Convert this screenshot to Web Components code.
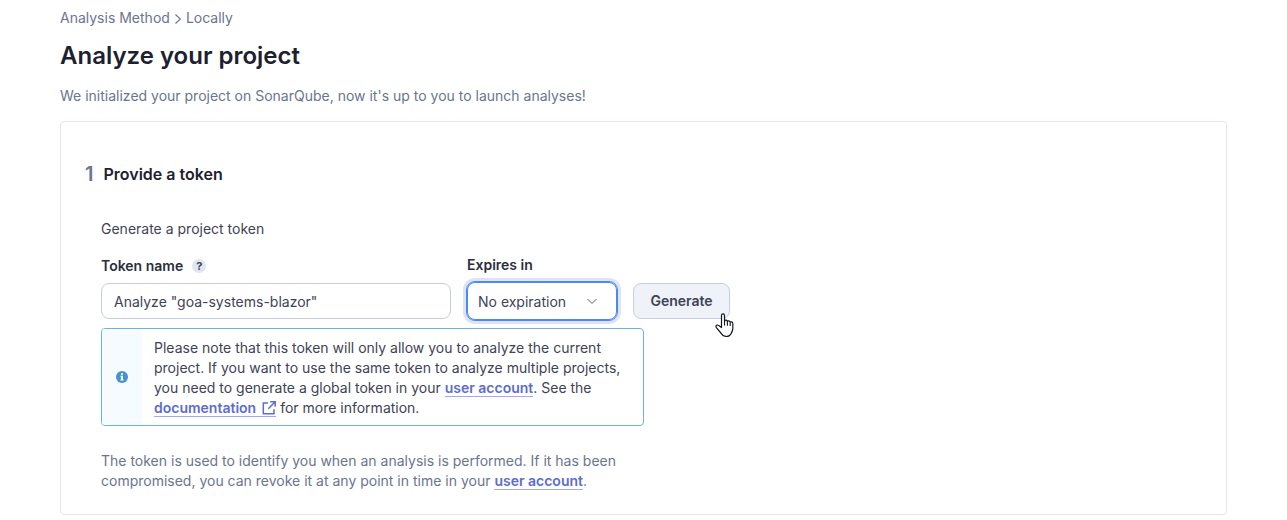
<!DOCTYPE html>
<html lang="en">
<head>
<meta charset="utf-8">
<meta name="viewport" content="width=device-width, initial-scale=1">
<title>Analyze your project</title>
<style>
  body {
    margin: 0;
    background: #fff;
    color: #3e4357;
    font: 400 14px/20px Inter, "Liberation Sans", sans-serif;
    --muted: #6a7590;
    --title: #1d212f;
    --border: #e1e6f3;
    --control-border: #c5cddf;
    --link: #5d6cd0;
  }
</style>
</head>
<body>
<analysis-page></analysis-page>

<template id="t-analysis-page">
  <style>
    :host { display: block; padding: 8px 60px 4px; }
    h1 { margin: 12px 0 14px; color: var(--title); font-size: 24px; line-height: 32px; font-weight: 600; }
    .lead { margin: 0 0 15px; color: var(--muted); }
    .intro { margin: 0 0 16px; }
    .row { display: flex; flex-wrap: wrap; align-items: center; gap: 16px; }
    .name { width: 350px; }
    .expiry { width: 150px; }
    action-button { align-self: flex-end; margin-bottom: 1px; }
    .body { max-width: 543px; }
    info-message { margin-top: 8px; }
    .note { margin: 25px 0 0; color: var(--muted); }
    a { color: var(--link); font-weight: 600; text-decoration: none; border-bottom: 1px solid #a0abee; }
    external-icon { margin-left: 6px; vertical-align: -2px; }
  </style>
  <crumb-trail></crumb-trail>
  <main>
    <h1>Analyze your project</h1>
    <p class="lead">We initialized your project on SonarQube, now it's up to you to launch analyses!</p>
    <step-card number="1">
      <span slot="title">Provide a token</span>
      <p class="intro">Generate a project token</p>
      <div class="row">
        <text-field class="name" label="Token name" value='Analyze "goa-systems-blazor"'></text-field>
        <select-field class="expiry" label="Expires in"></select-field>
        <action-button>Generate</action-button>
      </div>
      <div class="body">
        <info-message>Please note that this token will only allow you to analyze the current project. If you want to use the same token to analyze multiple projects, you need to generate a global token in your <a href="#account">user account</a>. See the <a href="#documentation">documentation<external-icon></external-icon></a> for more information.</info-message>
        <p class="note">The token is used to identify you when an analysis is performed. If it has been compromised, you can revoke it at any point in time in your <a href="#account">user account</a>.</p>
      </div>
    </step-card>
  </main>
</template>

<template id="t-crumb-trail">
  <style>
    :host { display: block; color: var(--muted); }
    nav { display: flex; align-items: center; gap: 4px; }
    a { color: inherit; text-decoration: none; }
    svg { display: block; }
  </style>
  <nav aria-label="Breadcrumb">
    <a href="#method">Analysis Method</a>
    <svg width="8" height="12" viewBox="0 0 8 12" fill="none" stroke="currentColor" stroke-width="1.1" aria-hidden="true"><path d="M1.500 2.500 6.300 7 1.500 11.500"/></svg>
    <a href="#locally">Locally</a>
  </nav>
</template>

<template id="t-step-card">
  <style>
    :host { display: block; border: 1px solid var(--border); border-radius: 4px; padding: 40px 24px 23px; }
    header { display: flex; align-items: center; gap: 10px; }
    .number { color: var(--muted); font-size: 20px; line-height: 24px; font-weight: 600; }
    h2 { margin: 0; color: var(--title); font-size: 16px; line-height: 24px; font-weight: 600; }
    .content { padding: 33px 16px 0; }
  </style>
  <header><span class="number"></span><h2><slot name="title"></slot></h2></header>
  <div class="content"><slot></slot></div>
</template>

<template id="t-text-field">
  <style>
    :host { display: flex; flex-direction: column; gap: 7px; }
    .top { display: flex; align-items: center; gap: 9px; }
    label { font-weight: 600; color: #2a2f40; }
    .help { width: 14px; height: 14px; border: 0; border-radius: 50%; padding: 0; background: var(--border); color: #3e4357; font: 700 11px/14px Inter, sans-serif; text-align: center; }
    input { box-sizing: border-box; width: 100%; height: 36px; padding: 0 12px; border: 1px solid var(--control-border); border-radius: 8px; background: #fff; color: inherit; font: inherit; }
  </style>
  <div class="top"><label for="field"></label><button class="help" type="button" aria-label="Help">?</button></div>
  <input id="field" type="text">
</template>

<template id="t-select-field">
  <style>
    :host { display: flex; flex-direction: column; gap: 7px; }
    label { font-weight: 600; color: #2a2f40; }
    .box { display: grid; align-items: center; }
    select, svg { grid-area: 1 / 1; }
    select { appearance: none; box-sizing: border-box; width: 100%; height: 38px; margin: 0; padding: 1px 32px 0 10px; border: 1px solid #4b8bf0; border-radius: 8px; outline: 1px solid #4b8bf0; background: #fff; box-shadow: 0 0 0 4px #e0e3f8; color: inherit; font: inherit; }
    svg { justify-self: end; margin-right: 19px; pointer-events: none; }
  </style>
  <label for="field"></label>
  <div class="box">
    <select id="field"><option>No expiration</option><option>30 days</option><option>90 days</option><option>1 year</option></select>
    <svg width="12" height="8" viewBox="0 0 12 8" fill="none" stroke="#5a5f70" stroke-width="1" aria-hidden="true"><path d="M1.500 2 6 6.500 10.500 2"/></svg>
  </div>
</template>

<template id="t-action-button">
  <style>
    :host { display: block; position: relative; }
    button { box-sizing: border-box; min-width: 97px; height: 36px; padding: 0 16px; border: 1px solid var(--control-border); border-radius: 8px; background: #eff2f9; color: #3e4357; font: inherit; font-weight: 600; cursor: pointer; display: block; }
    svg { position: absolute; right: -4px; bottom: -19px; pointer-events: none; }
  </style>
  <button type="button"><slot></slot></button>
  <svg width="19" height="25" viewBox="0 0 19 25" aria-hidden="true">
    <path fill="#fff" stroke="#15171f" stroke-width="1.200" stroke-linejoin="round" d="M6.500 14.500V2.600c0-2.200 3-2.200 3 0V8.300c.3-1.600 2.800-1.500 2.900.3.500-1.200 2.700-1.100 2.800.7.700-1 2.600-.6 2.600 1.100v5.200c0 2-.8 3.300-1.500 4.600-1 2.200-2.600 3.300-4.800 3.300-2.600 0-4.100-1-5.200-3L1.400 14.600c-1.300-2.200.8-3.300 2.300-2z"/>
    <path fill="none" stroke="#15171f" stroke-width="1.100" d="M9.500 8v4.500M12.400 8.800v4M15.200 9.500v3.500"/>
  </svg>
</template>

<template id="t-info-message">
  <style>
    :host { display: flex; overflow: hidden; border: 1px solid #6cb4dc; border-radius: 4px; }
    .icon { flex: none; width: 40px; display: grid; place-items: center; background: #f5fbff; }
    .text { flex: 1; min-width: 0; padding: 9px 12px 7px; }
  </style>
  <div class="icon"><svg width="12" height="12" viewBox="0 0 12 12" aria-hidden="true"><circle cx="6" cy="6" r="6" fill="#4593cb"/><path fill="#fff" d="M5 2.200h2v1.600H5zM4.400 4.800H7v3.800h.7v1H4.300v-1H5V5.800h-.6z"/></svg></div>
  <div class="text"><slot></slot></div>
</template>

<template id="t-external-icon">
  <style>
    :host { display: inline-block; width: 14px; height: 14px; }
    svg { display: block; }
  </style>
  <svg width="14" height="14" viewBox="0 0 14 14" fill="none" stroke="currentColor" stroke-width="1.500" aria-hidden="true"><path d="M6 2H1.300v10.700H12V8.200M8.200.800h5v5M13 1 6.300 7.700"/></svg>
</template>

<script>
  class TemplateElement extends HTMLElement {
    constructor() {
      super();
      const template = document.getElementById('t-' + this.localName);
      this.attachShadow({ mode: 'open' }).append(template.content.cloneNode(true));
    }
  }
  class CrumbTrail extends TemplateElement {}
  class StepCard extends TemplateElement {
    connectedCallback() {
      this.shadowRoot.querySelector('.number').textContent = this.getAttribute('number');
    }
  }
  class TextField extends TemplateElement {
    connectedCallback() {
      this.shadowRoot.querySelector('label').textContent = this.getAttribute('label');
      this.shadowRoot.querySelector('input').value = this.getAttribute('value');
    }
  }
  class SelectField extends TemplateElement {
    connectedCallback() {
      this.shadowRoot.querySelector('label').textContent = this.getAttribute('label');
    }
  }
  class ActionButton extends TemplateElement {}
  class InfoMessage extends TemplateElement {}
  class ExternalIcon extends TemplateElement {}
  class AnalysisPage extends TemplateElement {}

  customElements.define('crumb-trail', CrumbTrail);
  customElements.define('step-card', StepCard);
  customElements.define('text-field', TextField);
  customElements.define('select-field', SelectField);
  customElements.define('action-button', ActionButton);
  customElements.define('info-message', InfoMessage);
  customElements.define('external-icon', ExternalIcon);
  customElements.define('analysis-page', AnalysisPage);
</script>
</body>
</html>
